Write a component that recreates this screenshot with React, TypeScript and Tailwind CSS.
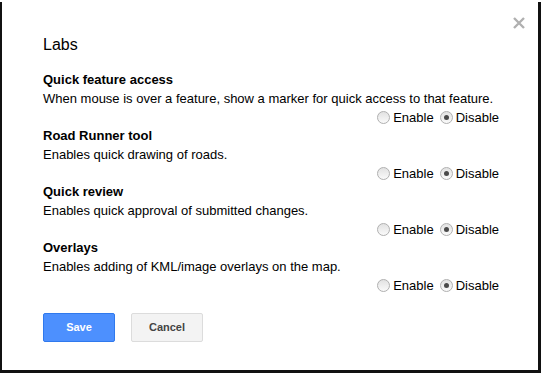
import React from "react";

const labs = [
  {
    name: "Quick feature access",
    desc: "When mouse is over a feature, show a marker for quick access to that feature.",
  },
  { name: "Road Runner tool", desc: "Enables quick drawing of roads." },
  { name: "Quick review", desc: "Enables quick approval of submitted changes." },
  { name: "Overlays", desc: "Enables adding of KML/image overlays on the map." },
];

function Radio({ checked }: { checked?: boolean }) {
  return (
    <span className="inline-flex h-[13px] w-[13px] items-center justify-center rounded-full border border-[#b0b0b0] bg-gradient-to-b from-[#e2e2e2] to-[#fafafa]">
      {checked && <span className="h-[5px] w-[5px] rounded-full bg-[#4a4a4a]" />}
    </span>
  );
}

export default function App() {
  return (
    <div className="h-[373px] w-[541px] bg-[#111]">
      <div
        className="relative ml-[2px] mt-[2px] h-[368px] w-[536px] bg-white text-[13px] text-black"
        style={{ fontFamily: '"Liberation Sans", Arial, sans-serif' }}
      >
        <button className="absolute right-[13px] top-[15px] text-[#b0b0b0]">
          <svg width="12" height="12" viewBox="0 0 12 12">
            <path d="M1 1L11 11M11 1L1 11" stroke="currentColor" strokeWidth="2.4" />
          </svg>
        </button>
        <div className="pl-[41px] pr-[39px] pt-[33px]">
          <h1 className="text-[16px] leading-[20px]">Labs</h1>
          <div className="mt-[16px]">
            {labs.map((lab) => (
              <div key={lab.name} className="h-[56px]">
                <div className="font-bold leading-[18px]">{lab.name}</div>
                <div className="leading-[19px]">{lab.desc}</div>
                <div className="flex items-center justify-end gap-[3px] leading-[19px]">
                  <Radio />
                  <span className="mr-[3px]">Enable</span>
                  <Radio checked />
                  <span>Disable</span>
                </div>
              </div>
            ))}
          </div>
          <div className="mt-[18px] flex gap-[16px]">
            <button className="h-[29px] w-[72px] rounded-[2px] border border-[#3079ed] bg-[#4d90fe] text-[11px] font-bold text-white">
              Save
            </button>
            <button className="h-[29px] w-[72px] rounded-[2px] border border-[#dcdcdc] bg-[#f3f3f3] text-[11px] font-bold text-[#444]">
              Cancel
            </button>
          </div>
        </div>
      </div>
    </div>
  );
}
